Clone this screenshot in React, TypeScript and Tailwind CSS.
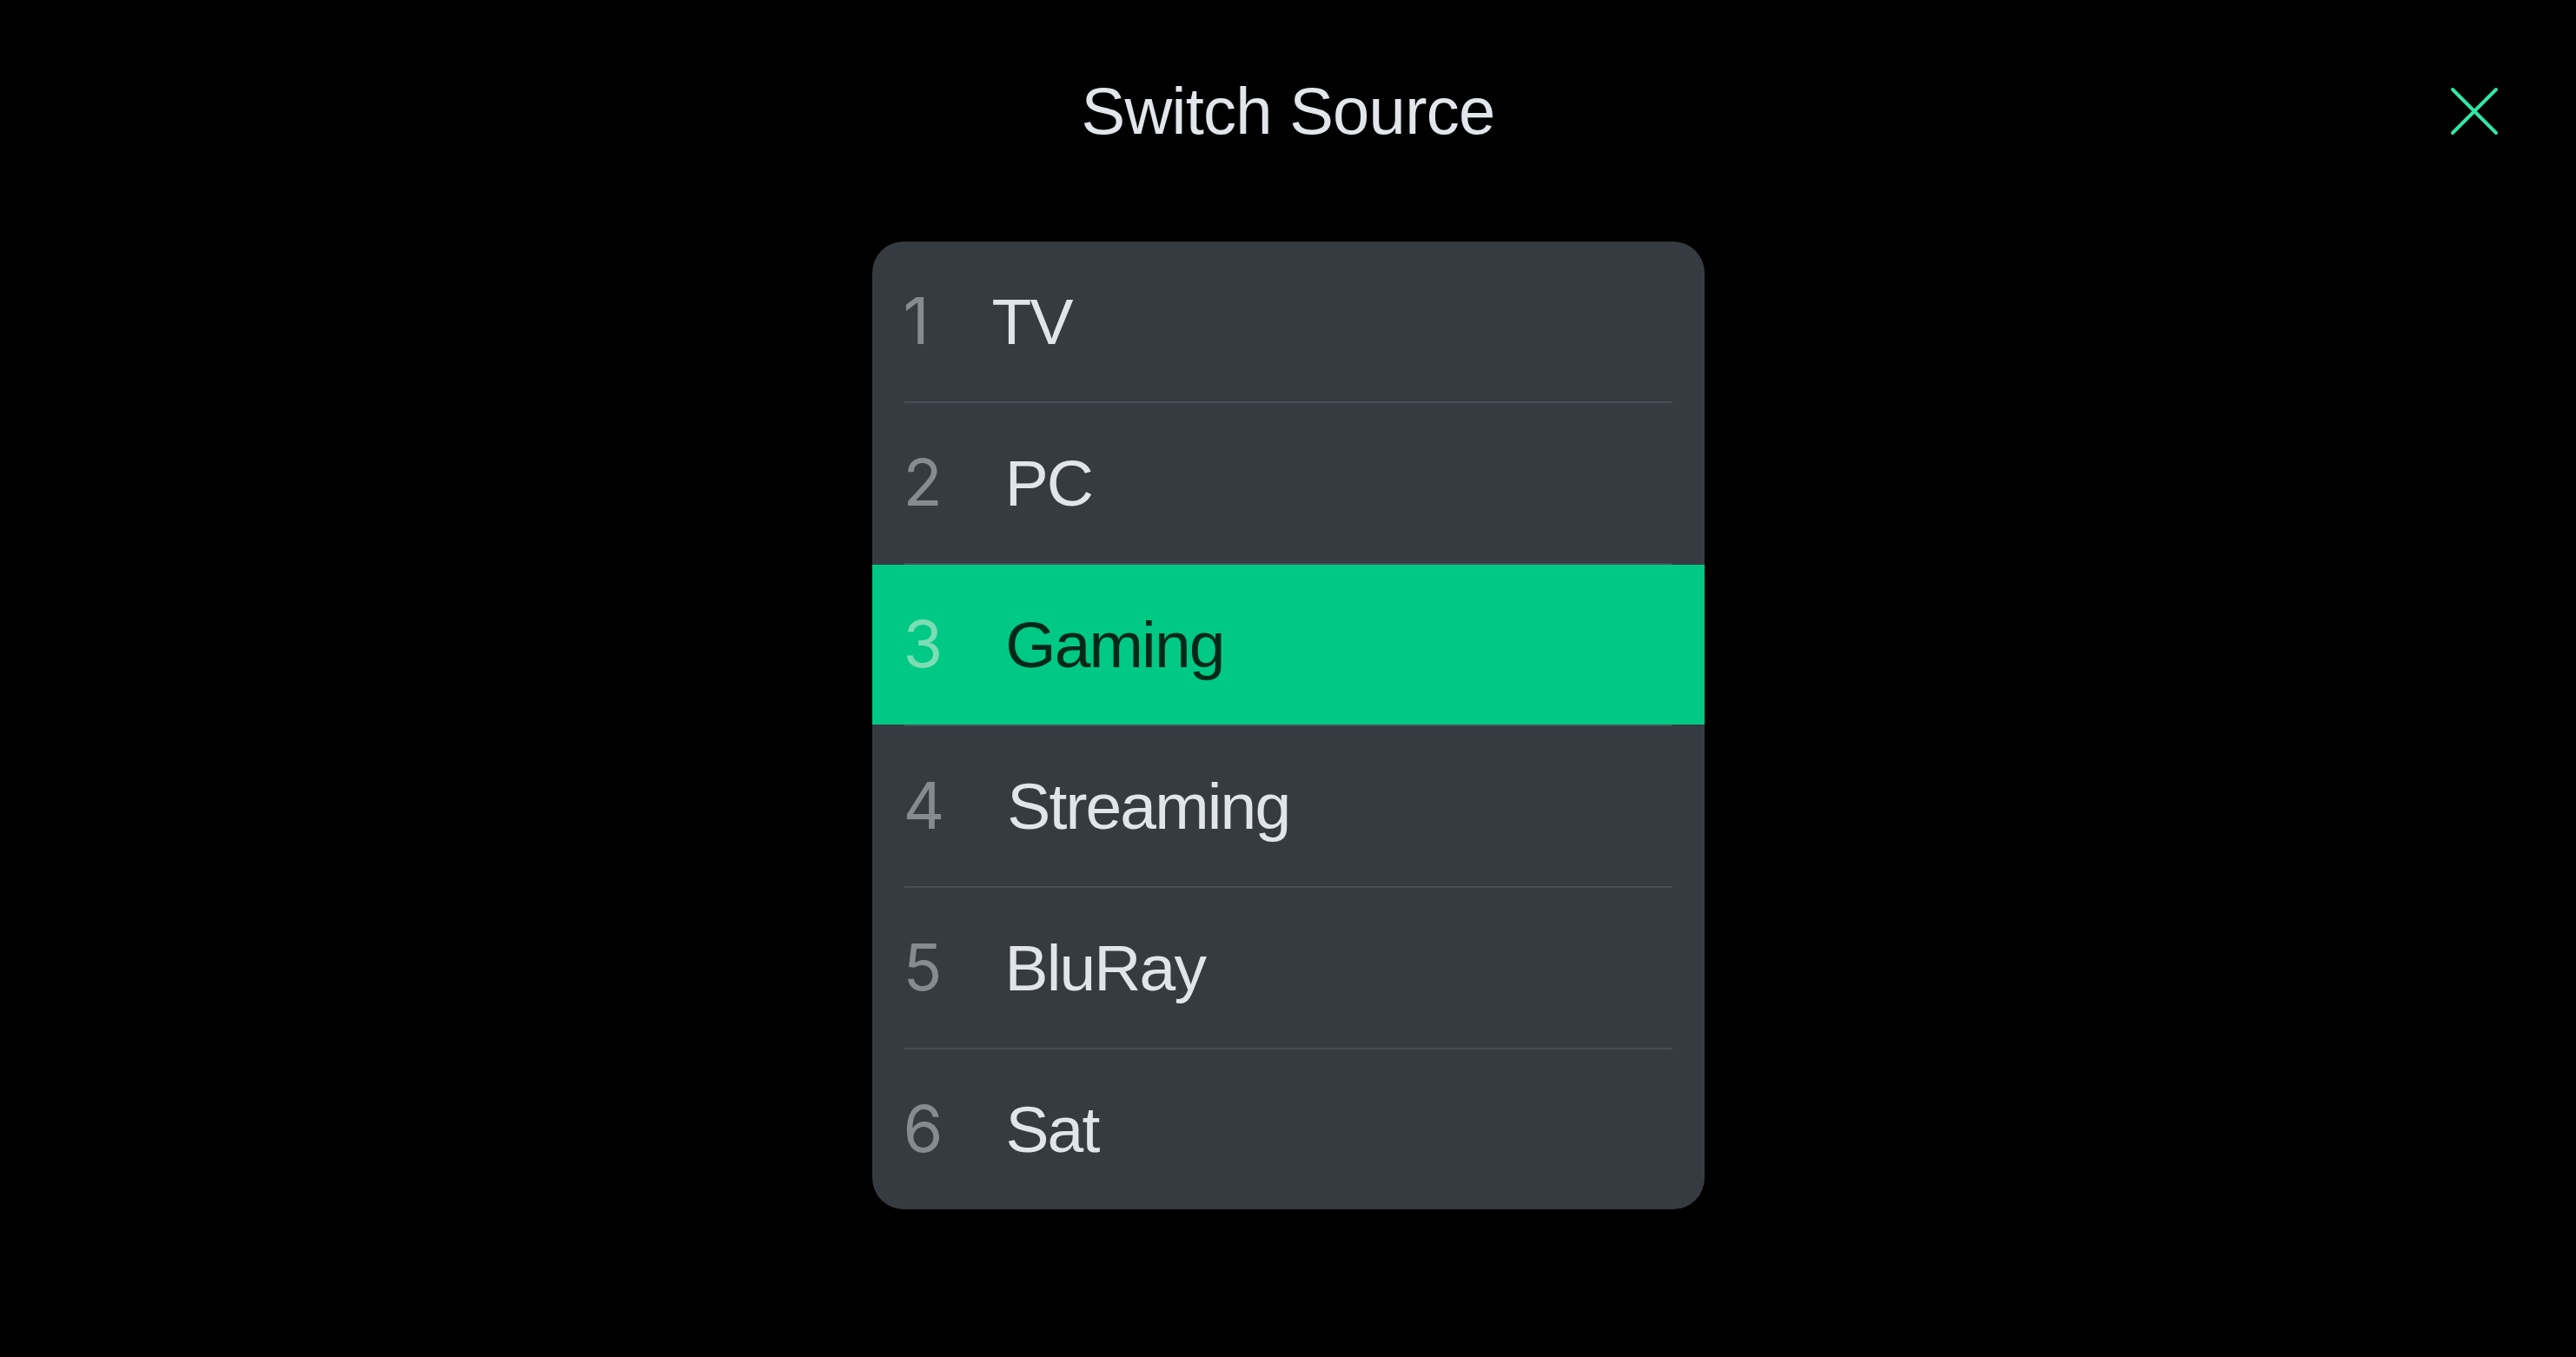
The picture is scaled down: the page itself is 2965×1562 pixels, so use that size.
const sources = [
  { id: 1, name: "TV" },
  { id: 2, name: "PC" },
  { id: 3, name: "Gaming" },
  { id: 4, name: "Streaming" },
  { id: 5, name: "BluRay" },
  { id: 6, name: "Sat" },
];

const active = 3;

const App = () => {
  return (
    <div className="min-h-screen w-full bg-black font-['Liberation_Sans',Arial,sans-serif]">
      {/* Header */}
      <div className="grid grid-cols-[1fr_auto_1fr] items-center pt-[90px]">
        <div />
        <h1 className="text-[76px] leading-[76px] font-normal tracking-[-0.01em] text-[#e2e5ea]">
          Switch Source
        </h1>
        <div className="flex justify-end pr-[89px]">
          <button className="flex items-center justify-center">
            <svg width="56" height="56" viewBox="0 0 56 56" fill="none">
              <path
                d="M3 3L53 53M53 3L3 53"
                stroke="#30e6a6"
                strokeWidth={4}
                strokeLinecap="round"
              />
            </svg>
          </button>
        </div>
      </div>

      {/* Source list */}
      <div className="mx-auto mt-[112px] w-[958px] overflow-hidden rounded-[36px] bg-[#363a41]">
        {sources.map((s, i) => {
          const isActive = s.id === active;
          return (
            <div key={s.id}>
              {i > 0 && <div className="mx-[37px] h-[2px] bg-[#4a4e56]" />}
              <div
                className={
                  isActive
                    ? "flex h-[184px] items-center bg-[#00c985] pl-[36px]"
                    : "flex h-[184px] items-center pl-[36px]"
                }
              >
                <div className="flex items-baseline">
                  <span
                    className={
                      isActive
                        ? "font-['Inter',sans-serif] text-[74px] leading-[75px] text-[#7ddcb6]"
                        : "font-['Inter',sans-serif] text-[74px] leading-[75px] text-[#868b92]"
                    }
                  >
                    {s.id}
                  </span>
                  <span
                    className={
                      isActive
                        ? "ml-[72px] text-[75px] leading-[75px] tracking-[-0.025em] text-[#00281a]"
                        : "ml-[72px] text-[75px] leading-[75px] tracking-[-0.025em] text-[#e1e5eb]"
                    }
                  >
                    {s.name}
                  </span>
                </div>
              </div>
            </div>
          );
        })}
      </div>
    </div>
  );
};

export default App;
